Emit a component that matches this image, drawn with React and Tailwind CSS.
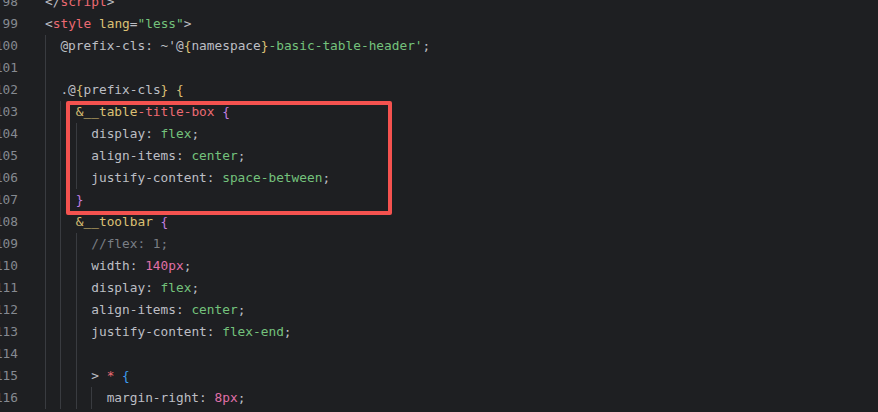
const C = {
  t: "text-[#bcbec4]",
  red: "text-[#ec6a72]",
  yel: "text-[#dcc074]",
  grn: "text-[#74c27c]",
  pur: "text-[#c27ee0]",
  blu: "text-[#3d9cf0]",
  pink: "text-[#e070a8]",
  cmt: "text-[#7a7e85]",
};

const lines = [
  { n: 98, ind: 0, g: [], tk: [["</", C.t], ["script", C.red], [">", C.t]] },
  { n: 99, ind: 0, g: [], tk: [["<", C.t], ["style", C.red], [" ", C.t], ["lang", C.yel], ["=", C.t], ['"less"', C.grn], [">", C.t]] },
  {
    n: 100, ind: 1, g: [0],
    tk: [["@prefix-cls: ~'@", C.t], ["{", C.yel], ["namespace", C.t], ["}", C.yel], ["-basic-table-header'", C.grn], [";", C.t]],
  },
  { n: 101, ind: 0, g: [0], tk: [] },
  { n: 102, ind: 1, g: [0], tk: [[".@", C.t], ["{", C.yel], ["prefix-cls", C.t], ["}", C.yel], [" ", C.t], ["{", C.yel]] },
  { n: 103, ind: 2, g: [0, 1], tk: [["&__table", C.yel], ["-title-box", C.red], [" ", C.t], ["{", C.pur]] },
  { n: 104, ind: 3, g: [0, 1, 2], tk: [["display: ", C.t], ["flex", C.grn], [";", C.t]] },
  { n: 105, ind: 3, g: [0, 1, 2], tk: [["align-items: ", C.t], ["center", C.grn], [";", C.t]] },
  { n: 106, ind: 3, g: [0, 1, 2], tk: [["justify-content: ", C.t], ["space-between", C.grn], [";", C.t]] },
  { n: 107, ind: 2, g: [0, 1], tk: [["}", C.pur]] },
  { n: 108, ind: 2, g: [0, 1], tk: [["&__toolbar", C.yel], [" ", C.t], ["{", C.pur]] },
  { n: 109, ind: 3, g: [0, 1, 2], tk: [["//flex: 1;", C.cmt]] },
  { n: 110, ind: 3, g: [0, 1, 2], tk: [["width: ", C.t], ["140px", C.pink], [";", C.t]] },
  { n: 111, ind: 3, g: [0, 1, 2], tk: [["display: ", C.t], ["flex", C.grn], [";", C.t]] },
  { n: 112, ind: 3, g: [0, 1, 2], tk: [["align-items: ", C.t], ["center", C.grn], [";", C.t]] },
  { n: 113, ind: 3, g: [0, 1, 2], tk: [["justify-content: ", C.t], ["flex-end", C.grn], [";", C.t]] },
  { n: 114, ind: 0, g: [0, 1, 2], tk: [] },
  { n: 115, ind: 3, g: [0, 1, 2], tk: [["> ", C.t], ["*", C.red], [" ", C.t], ["{", C.blu]] },
  { n: 116, ind: 4, g: [0, 1, 2, 3], tk: [["margin-right: ", C.t], ["8px", C.pink], [";", C.t]] },
];

function Line({ line }) {
  const units = Math.max(line.ind, line.g.length);
  return (
    <div className="flex h-[22px] items-stretch">
      <div className="w-[18px] shrink-0 flex justify-end leading-[22px] text-[#868a91] whitespace-pre">
        <span className="shrink-0">{line.n}</span>
      </div>
      <div className="w-[27px] shrink-0" />
      <div className="flex items-stretch leading-[22px] whitespace-pre">
        {Array.from({ length: units }).map((_, i) => (
          <span
            key={i}
            className={
              line.g.includes(i)
                ? "inline-block w-[2ch] border-l border-[#393b40]"
                : "inline-block w-[2ch]"
            }
          />
        ))}
        <span>
          {line.tk.map(([s, c], i) => (
            <span key={i} className={c}>
              {s}
            </span>
          ))}
        </span>
      </div>
    </div>
  );
}

export default function App() {
  return (
    <div
      className="relative w-[878px] h-[412px] overflow-hidden bg-[#1e1f22] text-[12.8px]"
      style={{ fontFamily: "'DejaVu Sans Mono', 'Liberation Mono', monospace" }}
    >
      <div className="mt-[-9px] flex flex-col">
        {lines.map((l) => (
          <Line key={l.n} line={l} />
        ))}
      </div>
      <div className="absolute left-[66px] top-[101px] w-[326px] h-[114px] border-4 border-[#f4524f] rounded-[2px]" />
    </div>
  );
}
